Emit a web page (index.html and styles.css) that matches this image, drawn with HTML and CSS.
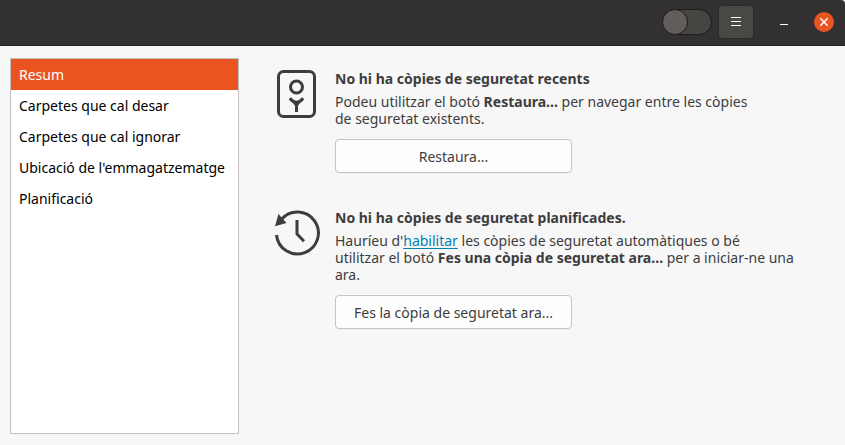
FILE: index.html
```html
<!DOCTYPE html>
<html lang="ca">
<head>
<meta charset="utf-8">
<title>Còpies de seguretat</title>
<link rel="stylesheet" href="styles.css">
</head>
<body>
<header class="titlebar">
  <div class="switch"><span class="knob"></span></div>
  <button class="menu" aria-label="Menú"><svg width="10" height="10" viewBox="0 0 10 10"><path d="M0 .5h10M0 4.5h10M0 8.5h10" stroke="#fff" fill="none"/></svg></button>
  <button class="minimize" aria-label="Minimitza"></button>
  <button class="close" aria-label="Tanca"><svg width="10" height="10" viewBox="0 0 10 10"><path d="M1.3 1.3l7.4 7.4M8.7 1.3L1.3 8.7" stroke="#fff" stroke-width="1.5" fill="none"/></svg></button>
</header>
<main class="content">
  <nav class="sidebar">
    <a class="row selected"><span class="n1">Resum</span></a>
    <a class="row"><span class="n2">Carpetes que cal desar</span></a>
    <a class="row"><span class="n3">Carpetes que cal ignorar</span></a>
    <a class="row"><span class="n4">Ubicació de l'emmagatzematge</span></a>
    <a class="row"><span class="n5">Planificació</span></a>
  </nav>
  <div class="page">
    <section class="item">
      <svg class="icon" width="48" height="48" viewBox="0 0 48 48" fill="none" stroke="#3d3d3d" stroke-width="3">
        <rect x="5.5" y="1.5" width="36" height="45" rx="5"/>
        <circle cx="23.5" cy="17" r="6"/>
        <path d="M16.8 28.2q3.2 4 6.7 4t6.7-4M23.5 31v11"/>
        <path d="M19 31.7h9l-3 4h-3z" fill="#3d3d3d" stroke="none"/>
      </svg>
      <div class="details">
        <h2><span class="t1">No hi ha còpies de seguretat recents</span></h2>
        <p><span class="p1">Podeu utilitzar el botó <b>Restaura...</b> per navegar entre les còpies</span><br><span class="p2">de seguretat existents.</span></p>
        <button class="action"><span class="b1">Restaura...</span></button>
      </div>
    </section>
    <section class="item">
      <svg class="icon" width="48" height="48" viewBox="0 0 48 48" fill="none" stroke="#3d3d3d" stroke-width="3">
        <path d="M8.2 10.6A21 21 0 1 1 3.5 26"/>
        <path d="M24 11v14l7 7.2"/>
        <path d="M5.5 5L2 17.2l11.5-3.3z" fill="#3d3d3d" stroke="none"/>
      </svg>
      <div class="details">
        <h2><span class="t2">No hi ha còpies de seguretat planificades.</span></h2>
        <p><span class="p3">Hauríeu d'<a class="link">habilitar</a> les còpies de seguretat automàtiques o bé</span><br><span class="p4">utilitzar el botó <b>Fes una còpia de seguretat ara...</b> per a iniciar-ne una</span><br><span class="p5">ara.</span></p>
        <button class="action"><span class="b2">Fes la còpia de seguretat ara...</span></button>
      </div>
    </section>
  </div>
</main>
</body>
</html>
```
FILE: styles.css
```css
* { box-sizing: border-box; }
body {
  margin: 0;
  height: 445px;
  overflow: hidden;
  display: flex;
  flex-direction: column;
  background: #f7f7f7;
  color: #3d3d3d;
  font: 14px/17px "Noto Sans", "Open Sans", sans-serif;
  white-space: nowrap;
}
button { margin: 0; padding: 0; font: inherit; color: inherit; }
.titlebar {
  height: 46px;
  flex: none;
  display: flex;
  align-items: center;
  justify-content: flex-end;
  padding: 0 11px 2px 0;
  background: #323030;
  border-bottom: 1px solid #211f1f;
  border-radius: 0 4px 0 0;
}
.switch {
  width: 50px;
  height: 26px;
  border: 1px solid #1d1b1b;
  border-radius: 13px;
  background: #474542;
}
.knob {
  display: block;
  width: 26px;
  height: 26px;
  margin: -1px;
  border: 1px solid #1d1b1b;
  border-radius: 50%;
  background: #625e5c;
}
.menu {
  width: 36px;
  height: 34px;
  margin-left: 6px;
  display: flex;
  align-items: center;
  justify-content: center;
  border: 1px solid #2b2929;
  border-radius: 4px;
  background: #4a4845;
}
.minimize {
  width: 8px;
  height: 1px;
  margin: 5px 0 0 26px;
  border: 0;
  background: #fff;
}
.close {
  width: 20px;
  height: 20px;
  margin-left: 26px;
  display: flex;
  align-items: center;
  justify-content: center;
  border: 0;
  border-radius: 50%;
  background: #e95420;
}
.content { flex: 1; display: flex; padding: 12px 10px 11px; }
.sidebar {
  width: 229px;
  border: 1px solid #c2c2c2;
  background: #fff;
  color: #000;
}
.row { display: flex; align-items: center; height: 31px; padding-left: 8px; }
.row.selected { background: #e95420; color: #fff; }
.page { display: flex; flex-direction: column; gap: 36px; padding: 12px 0 0 34px; }
.item { display: flex; gap: 14px; }
.icon { flex: none; }
h2 { margin: 0 0 6px; font-size: 14px; line-height: 17px; font-weight: 700; }
p { margin: 0 0 12px; }
.link { color: #007fb0; text-decoration: underline; text-underline-offset: 2px; }
.action {
  display: flex;
  align-items: center;
  justify-content: center;
  width: 237px;
  height: 34px;
  border: 1px solid #c5c5c5;
  border-radius: 4px;
  background: #fdfdfd;
  box-shadow: 0 1px 1px #00000008;
}
```
